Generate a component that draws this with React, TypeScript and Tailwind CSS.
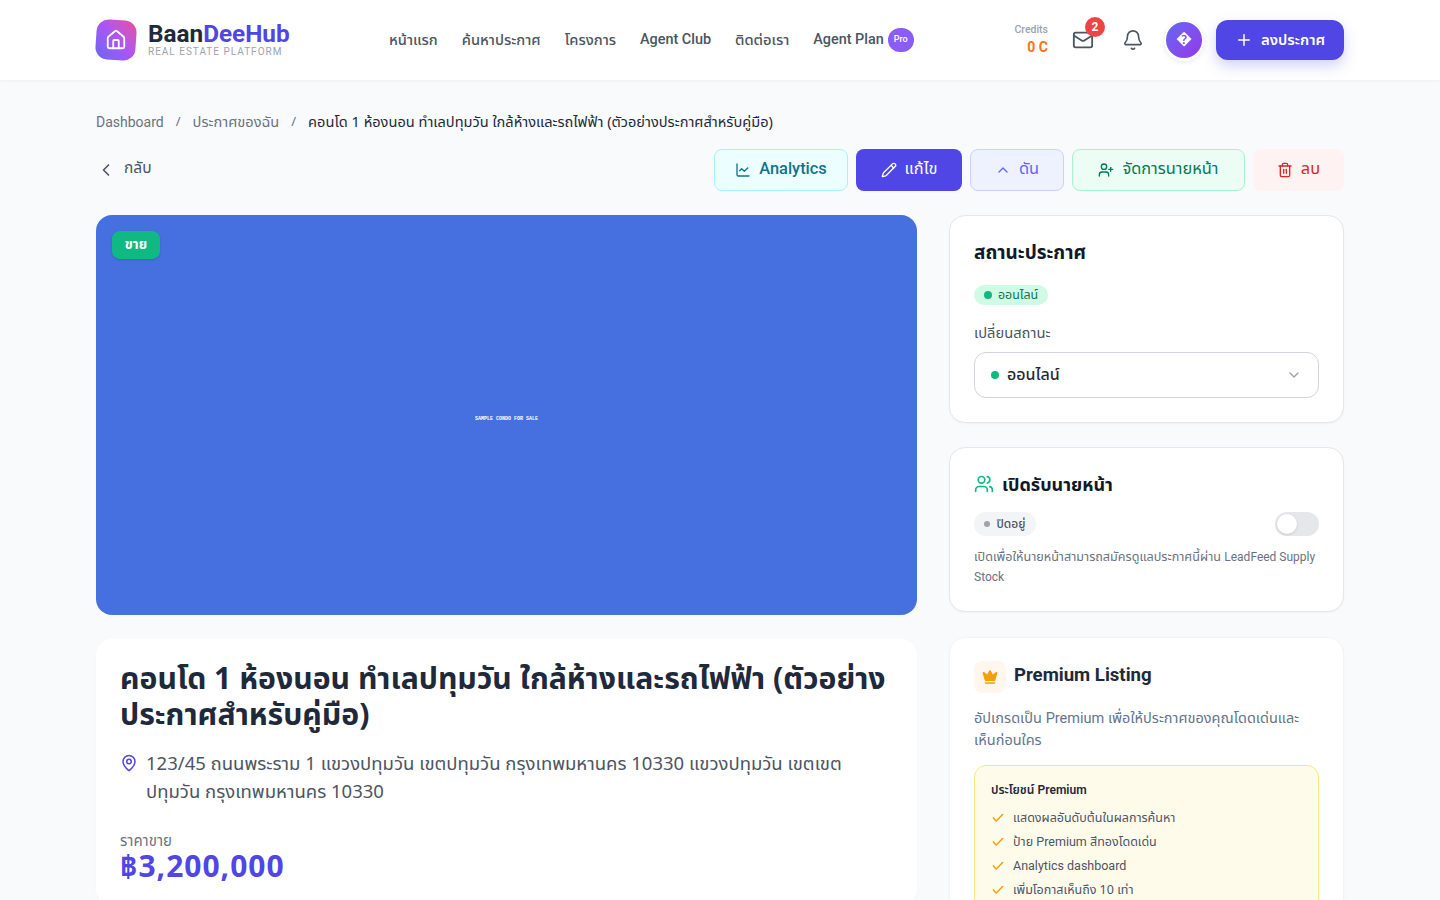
import { Bell, Check, ChevronDown, ChevronLeft, ChevronUp, ChartLine, Crown, Home, Mail, MapPin, Pencil, Plus, Trash2, UserPlus, Users } from 'lucide-react';

const benefits = [
	<>แสดงผลอันดับต้นในผลการค้นหา</>,
	<>ป้าย <span className="font-['Roboto',sans-serif]">Premium</span> สีทองโดดเด่น</>,
	<span className="font-['Roboto',sans-serif]">Analytics dashboard</span>,
	<>เพิ่มโอกาสเห็นถึง 10 เท่า</>,
];

function Header() {
	return (
		<header className="h-20 bg-white shadow-[0_1px_3px_rgba(0,0,0,0.05)]">
			<div className="mx-auto flex h-full w-[1248px] items-center">
				<div className="flex w-[293px] items-center gap-3">
					<div className="flex h-10 w-10 rotate-[4deg] items-center justify-center rounded-xl bg-gradient-to-tr from-[#6366f1] via-[#a855f7] to-[#ec4899]">
						<Home className="h-[22px] w-[22px] -rotate-[4deg] text-white" strokeWidth={2} />
					</div>
					<div className="pb-0.5 font-['Roboto',sans-serif]">
						<div className="text-[24.3px] leading-[25px] font-bold text-[#1e293b]">
							Baan<span className="text-[#4f46e5]">DeeHub</span>
						</div>
						<div className="text-[10px] leading-[12px] tracking-[1px] text-[#9ca3af]">REAL ESTATE PLATFORM</div>
					</div>
				</div>
				<nav className="flex items-center gap-6 text-[14.7px] font-medium text-[#4b5563]">
					<span className="pb-0.5">หน้าแรก</span>
					<span className="pb-0.5">ค้นหาประกาศ</span>
					<span className="pb-0.5">โครงการ</span>
					<span className="font-['Roboto',sans-serif] text-[14.4px]">Agent Club</span>
					<span className="pb-0.5">ติดต่อเรา</span>
					<span className="flex items-center gap-1 font-['Roboto',sans-serif] text-[14.4px]">
						<span>Agent Plan</span>
						<span className="flex h-6 w-[26px] items-center justify-center rounded-full bg-[#8b5cf6] text-[9px] text-white">Pro</span>
					</span>
				</nav>
				<div className="ml-auto flex items-center">
					<div className="mr-6 text-right font-['Roboto',sans-serif]">
						<div className="text-[10.5px] leading-[14px] font-medium text-[#9ca3af]">Credits</div>
						<div className="text-sm leading-5 font-bold text-[#f97316]">0 C</div>
					</div>
					<div className="relative mr-[28px]">
						<Mail className="h-[22px] w-[22px] text-[#4b5563]" strokeWidth={2} />
						<span className="absolute -top-[12px] left-[13px] flex h-5 w-5 items-center justify-center rounded-full bg-[#ef4444] font-['Roboto',sans-serif] text-[12px] font-bold text-white">2</span>
					</div>
					<Bell className="mr-[22px] h-[22px] w-[22px] text-[#4b5563]" strokeWidth={1.8} />
					<div className="mr-[14px] flex h-9 w-9 items-center justify-center rounded-full bg-gradient-to-br from-[#6366f1] to-[#9333ea] pb-1 text-base font-bold text-white shadow-[0_1px_0_2px_#fff,0_2px_6px_rgba(0,0,0,0.2)]">
						�
					</div>
					<button className="flex h-10 w-32 items-center justify-center gap-2 rounded-xl bg-[#4f46e5] text-[14.9px] font-semibold text-white shadow-[0_6px_14px_rgba(79,70,229,0.25)]">
						<Plus className="h-[18px] w-[18px]" />
						<span className="pb-0.5">ลงประกาศ</span>
					</button>
				</div>
			</div>
		</header>
	);
}

function ActionBar() {
	return (
		<div className="mt-[17px] flex h-[42px] items-center justify-between">
			<div className="flex items-center gap-2 text-[15.5px] text-[#4b5563]">
				<ChevronLeft className="h-5 w-5" />
				<span className="pb-1">กลับ</span>
			</div>
			<div className="flex text-[16.4px]">
				<button className="flex h-[42px] w-[134px] items-center justify-center gap-2 rounded-lg border border-[#a5f3fc] bg-[#ecfeff] text-[#0e7490]">
					<ChartLine className="h-4 w-4" />
					<span className="pb-0.5 font-['Roboto',sans-serif] text-[16.4px] font-medium">Analytics</span>
				</button>
				<button className="ml-2 flex h-[42px] w-[106px] items-center justify-center gap-2 rounded-lg bg-[#4f46e5] text-white">
					<Pencil className="h-4 w-4" />
					<span className="pb-1">แก้ไข</span>
				</button>
				<button className="ml-2 flex h-[42px] w-[94px] items-center justify-center gap-2 rounded-lg border border-[#c7d2fe] bg-[#eef2ff] text-[#6366f1]">
					<ChevronUp className="h-4 w-4" />
					<span className="pb-1">ดัน</span>
				</button>
				<button className="ml-2 flex h-[42px] w-[173px] items-center justify-center gap-2 rounded-lg border border-[#a7f3d0] bg-[#ecfdf5] text-[#047857]">
					<UserPlus className="h-4 w-4" />
					<span className="pb-1">จัดการนายหน้า</span>
				</button>
				<button className="ml-2 flex h-[42px] w-[91px] items-center justify-center gap-2 rounded-lg bg-[#fef2f2] text-[#dc2626]">
					<Trash2 className="h-4 w-4" />
					<span className="pb-1">ลบ</span>
				</button>
			</div>
		</div>
	);
}

function MainColumn() {
	return (
		<div className="w-[821px]">
			<div className="relative flex h-[400px] items-center justify-center rounded-2xl bg-[#4670df] pt-[9px]">
				<span className="absolute top-4 left-4 flex h-7 w-12 items-center justify-center rounded-lg bg-[#10b981] pb-0.5 text-[13.5px] font-bold text-white shadow-sm">ขาย</span>
				<span className="font-['Liberation_Mono',monospace] text-[5px] font-bold text-white">SAMPLE CONDO FOR SALE</span>
			</div>
			<div className="mt-6 rounded-2xl bg-white px-6 pt-[21px] pb-6 shadow-[0_1px_2px_rgba(0,0,0,0.03)]">
				<h1 className="text-[30.2px] leading-9 font-bold text-[#1e293b]">คอนโด 1 ห้องนอน ทำเลปทุมวัน ใกล้ห้างและรถไฟฟ้า (ตัวอย่างประกาศสำหรับคู่มือ)</h1>
				<div className="mt-[17px] flex gap-2 text-[18.5px] leading-7 text-[#4b5563]">
					<MapPin className="mt-[5px] h-[18px] w-[18px] shrink-0 text-[#4f46e5]" />
					<p>123/45 ถนนพระราม 1 แขวงปทุมวัน เขตปทุมวัน กรุงเทพมหานคร 10330 แขวงปทุมวัน เขตเขต<br />ปทุมวัน กรุงเทพมหานคร 10330</p>
				</div>
				<div className="mt-[25px] text-[15px] leading-5 text-[#6b7280]">ราคาขาย</div>
				<div className="text-[30px] leading-8 font-bold tracking-[1px] text-[#4f46e5]">฿3,200,000</div>
			</div>
		</div>
	);
}

function Sidebar() {
	return (
		<div className="w-[395px]">
			<div className="h-[208px] rounded-2xl border border-[#e5e7eb] bg-white px-6 pt-[22px] shadow-[0_1px_2px_rgba(0,0,0,0.04)]">
				<h2 className="text-[19px] leading-7 font-bold text-[#111827]">สถานะประกาศ</h2>
				<span className="mt-[19px] flex h-5 w-[74px] items-center justify-center gap-1.5 rounded-full bg-[#d1fae5] text-[12.4px] text-[#047857]">
					<span className="h-2 w-2 rounded-full bg-[#10b981]" />
					ออนไลน์
				</span>
				<div className="mt-[17px] text-[14.7px] leading-5 text-[#4b5563]">เปลี่ยนสถานะ</div>
				<div className="mt-[10px] flex h-[46px] items-center rounded-xl border border-[#d1d5db] pr-4 pl-4">
					<span className="mr-2 h-2 w-2 rounded-full bg-[#10b981]" />
					<span className="pb-0.5 text-base font-medium text-[#1f2937]">ออนไลน์</span>
					<ChevronDown className="ml-auto h-4 w-4 text-[#9ca3af]" />
				</div>
			</div>
			<div className="mt-6 h-[165px] rounded-2xl border border-[#e5e7eb] bg-white px-6 pt-[22px] shadow-[0_1px_2px_rgba(0,0,0,0.04)]">
				<div className="flex items-center gap-2">
					<Users className="h-5 w-5 text-[#10b981]" />
					<h2 className="text-lg leading-7 font-bold text-[#111827]">เปิดรับนายหน้า</h2>
				</div>
				<div className="mt-[14px] flex items-center justify-between">
					<span className="flex h-6 w-[62px] items-center justify-center gap-1.5 rounded-full bg-[#f3f4f6] text-xs font-medium text-[#4b5563]">
						<span className="h-1.5 w-1.5 rounded-full bg-[#9ca3af]" />
						ปิดอยู่
					</span>
					<span className="flex h-6 w-11 items-center rounded-full bg-[#e5e7eb] px-0.5">
						<span className="h-5 w-5 rounded-full bg-white shadow" />
					</span>
				</div>
				<p className="mt-[11px] text-[12.6px] leading-5 text-[#6b7280]">
					เปิดเพื่อให้นายหน้าสามารถสมัครดูแลประกาศนี้ผ่าน <span className="font-['Roboto',sans-serif] text-xs">LeadFeed Supply Stock</span>
				</p>
			</div>
			<div className="mt-[25px] rounded-2xl border border-[#f3f4f6] bg-white px-6 pt-[23px] pb-6 shadow-[0_1px_2px_rgba(0,0,0,0.03)]">
				<div className="flex items-center gap-2">
					<span className="flex h-8 w-8 items-center justify-center rounded-lg bg-[#fff7ed]">
						<Crown className="h-4 w-4 fill-[#f59e0b] text-[#f59e0b]" />
					</span>
					<h2 className="pb-0.5 font-['Roboto',sans-serif] text-[18.6px] font-bold text-[#1e293b]">Premium Listing</h2>
				</div>
				<p className="mt-[14px] text-[14.5px] leading-5 text-[#64748b]">
					อัปเกรดเป็น <span className="font-['Roboto',sans-serif]">Premium</span> เพื่อให้ประกาศของคุณโดดเด่นและ<br />เห็นก่อนใคร
				</p>
				<div className="mt-[16px] rounded-xl border border-[#fde68a] bg-[#fffbeb] px-4 pt-[16px] pb-4">
					<div className="text-xs font-semibold text-[#1f2937]">ประโยชน์ <span className="font-['Roboto',sans-serif]">Premium</span></div>
					<ul className="mt-[10px] flex flex-col gap-1 text-[12.5px] leading-5 text-[#4b5563]">
						{benefits.map((b, i) => (
							<li key={i} className="flex items-center gap-2">
								<Check className="h-3.5 w-3.5 text-[#f59e0b]" strokeWidth={2.5} />
								<span>{b}</span>
							</li>
						))}
					</ul>
				</div>
			</div>
		</div>
	);
}

export default function App() {
	return (
		<div className="h-[900px] overflow-hidden bg-[#f9fafc] font-['Noto_Sans','Noto_Sans_Thai',sans-serif]">
			<Header />
			<main className="mx-auto w-[1248px] pt-8">
				<div className="flex h-5 items-center gap-3 text-[14.6px] text-[#6b7280]">
					<span className="font-['Roboto',sans-serif] text-sm">Dashboard</span>
					<span className="text-[13px]">/</span>
					<span>ประกาศของฉัน</span>
					<span className="text-[13px]">/</span>
					<span className="text-[#1f2937]">คอนโด 1 ห้องนอน ทำเลปทุมวัน ใกล้ห้างและรถไฟฟ้า (ตัวอย่างประกาศสำหรับคู่มือ)</span>
				</div>
				<ActionBar />
				<div className="mt-6 flex gap-8">
					<MainColumn />
					<Sidebar />
				</div>
			</main>
		</div>
	);
}
